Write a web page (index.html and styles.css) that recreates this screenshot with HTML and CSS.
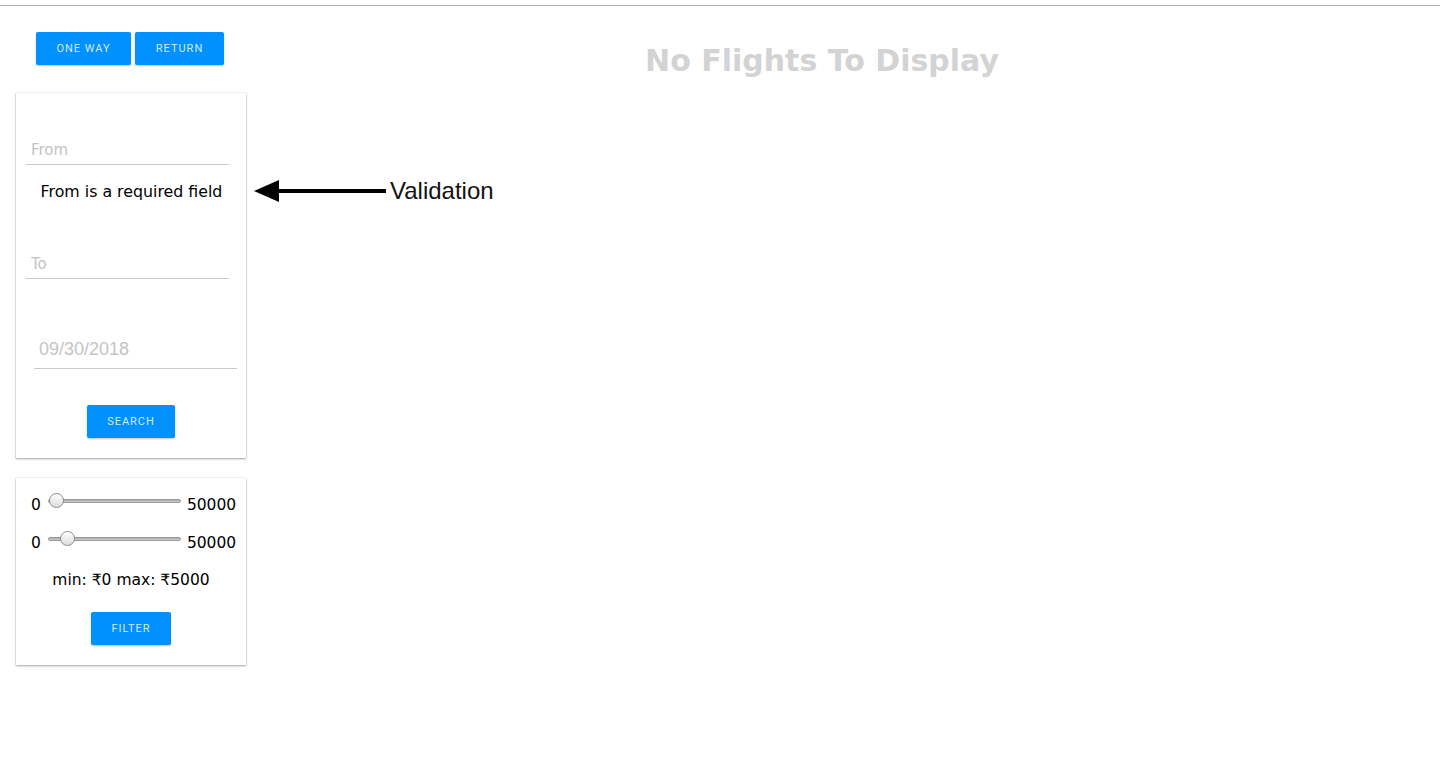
FILE: index.html
```html
<!DOCTYPE html>
<html lang="en">
<head>
<meta charset="utf-8">
<title>Flight Search</title>
<link rel="stylesheet" href="styles.css">
</head>
<body>
<div class="topline"></div>
<div class="app">
  <aside class="sidebar">
    <div class="toggle">
      <button class="btn btn-oneway">ONE WAY</button>
      <button class="btn btn-return">RETURN</button>
    </div>
    <div class="card search-card">
      <div class="field field-from"><input type="text" placeholder="From"></div>
      <div class="error">From is a required field</div>
      <div class="field field-to"><input type="text" placeholder="To"></div>
      <div class="field field-date"><input type="text" placeholder="09/30/2018"></div>
      <div class="center"><button class="btn btn-search">SEARCH</button></div>
    </div>
    <div class="card filter-card">
      <div class="range-row"><span class="lbl">0</span><input class="range" type="range" min="0" max="50000" value="0"><span class="lbl">50000</span></div>
      <div class="range-row"><span class="lbl">0</span><input class="range" type="range" min="0" max="50000" value="5000"><span class="lbl">50000</span></div>
      <div class="minmax">min: ₹0 max: ₹5000</div>
      <div class="center"><button class="btn btn-filter">FILTER</button></div>
    </div>
  </aside>
  <main class="results">
    <h1 class="empty">No Flights To Display</h1>
  </main>
</div>
<div class="annotation">
  <svg width="132" height="24" viewBox="0 0 132 24">
    <polygon points="0,12 25,1 25,23" fill="#000"/>
    <rect x="22" y="10" width="110" height="4" fill="#000"/>
  </svg>
  <span class="anno-text">Validation</span>
</div>
</body>
</html>
```

FILE: styles.css
```css
html, body {
  margin: 0;
  padding: 0;
  background: #fff;
}
body {
  padding-top: 5px;
  font-family: "DejaVu Sans", Verdana, sans-serif;
  color: #000;
  position: relative;
  height: 768px;
  overflow: hidden;
}
.topline {
  height: 1px;
  background: #b3b3b3;
}
.app {
  display: flex;
  align-items: flex-start;
}
.sidebar {
  width: 230px;
  margin-left: 16px;
  display: flex;
  flex-direction: column;
}
.toggle {
  display: flex;
  justify-content: center;
  gap: 4px;
  margin-top: 26px;
  padding-right: 2px;
}
.btn {
  font-family: Roboto, "Noto Sans", sans-serif;
  font-size: 11px;
  letter-spacing: 1px;
  color: #d4eaff;
  background: #0091ff;
  border: none;
  border-radius: 2px;
  height: 33px;
  padding: 0;
  box-shadow: 0 1px 2px rgba(0,0,0,0.25);
  cursor: pointer;
}
.btn-oneway { width: 95px; }
.btn-return { width: 89px; }
.btn-search { width: 88px; }
.btn-filter { width: 80px; }
.card {
  background: #fff;
  box-shadow: 0 1px 2px rgba(0,0,0,0.35), 0 0 1px rgba(0,0,0,0.2);
}
.search-card {
  margin-top: 28px;
  padding: 37px 0 20px 0;
}
.field input {
  display: block;
  width: 100%;
  box-sizing: border-box;
  border: none;
  border-bottom: 1px solid #c8c8c8;
  outline: none;
  font-family: "DejaVu Sans", sans-serif;
  background: transparent;
  padding: 0 0 0 5px;
}
.field input::placeholder { color: #c4c4c4; }
.field-from, .field-to {
  margin: 0 17px 0 10px;
}
.field-from input, .field-to input {
  height: 35px;
  font-size: 15px;
  padding-top: 5px;
}
.error {
  font-size: 15.8px;
  text-align: center;
  line-height: 20px;
  margin: 17px 0 42px;
  padding-left: 1px;
}
.field-date {
  margin: 49px 9px 0 18px;
}
.field-date input {
  height: 41px;
  font-size: 18px;
  padding-left: 5px;
  padding-top: 2px;
  font-family: "Liberation Sans", Arial, sans-serif;
}
.field-date input::placeholder { color: #c4c4c4; }
.center {
  display: flex;
  justify-content: center;
}
.search-card .center { margin-top: 36px; }
.filter-card {
  margin-top: 20px;
  padding: 16px 0 20px;
}
.range-row {
  display: flex;
  align-items: center;
  height: 22px;
  padding-left: 15px;
  margin-bottom: 16px;
  font-size: 15.5px;
}
.range-row .lbl { line-height: 22px; }
.range {
  -webkit-appearance: none;
  appearance: none;
  width: 133px;
  height: 16px;
  margin: 0 6px 0 7px;
  background: transparent;
  position: relative;
  top: -4px;
}
.range::-webkit-slider-runnable-track {
  height: 4px;
  border-radius: 2px;
  background: linear-gradient(#a8a8a8, #d0d0d0);
  border: 1px solid #9a9a9a;
}
.range::-webkit-slider-thumb {
  -webkit-appearance: none;
  width: 15px;
  height: 15px;
  border-radius: 50%;
  background: linear-gradient(#ffffff, #dcdcdc);
  border: 1px solid #8c8c8c;
  margin-top: -7px;
}
.minmax {
  text-align: center;
  font-size: 15.5px;
  line-height: 20px;
  margin-top: 3px;
}
.filter-card .center { margin-top: 22px; }
.results {
  flex: 1;
  text-align: center;
  padding-right: 42px;
}
.empty {
  margin: 37px 0 0;
  font-size: 30px;
  font-weight: bold;
  color: #d3d3d3;
  font-family: "DejaVu Sans", Verdana, sans-serif;
}
.annotation {
  position: absolute;
  left: 254px;
  top: 177px;
  display: flex;
  align-items: center;
  gap: 4px;
}
.annotation svg { display: block; }
.anno-text {
  font-family: "Liberation Sans", Arial, sans-serif;
  font-size: 24px;
  color: #111;
}
```
